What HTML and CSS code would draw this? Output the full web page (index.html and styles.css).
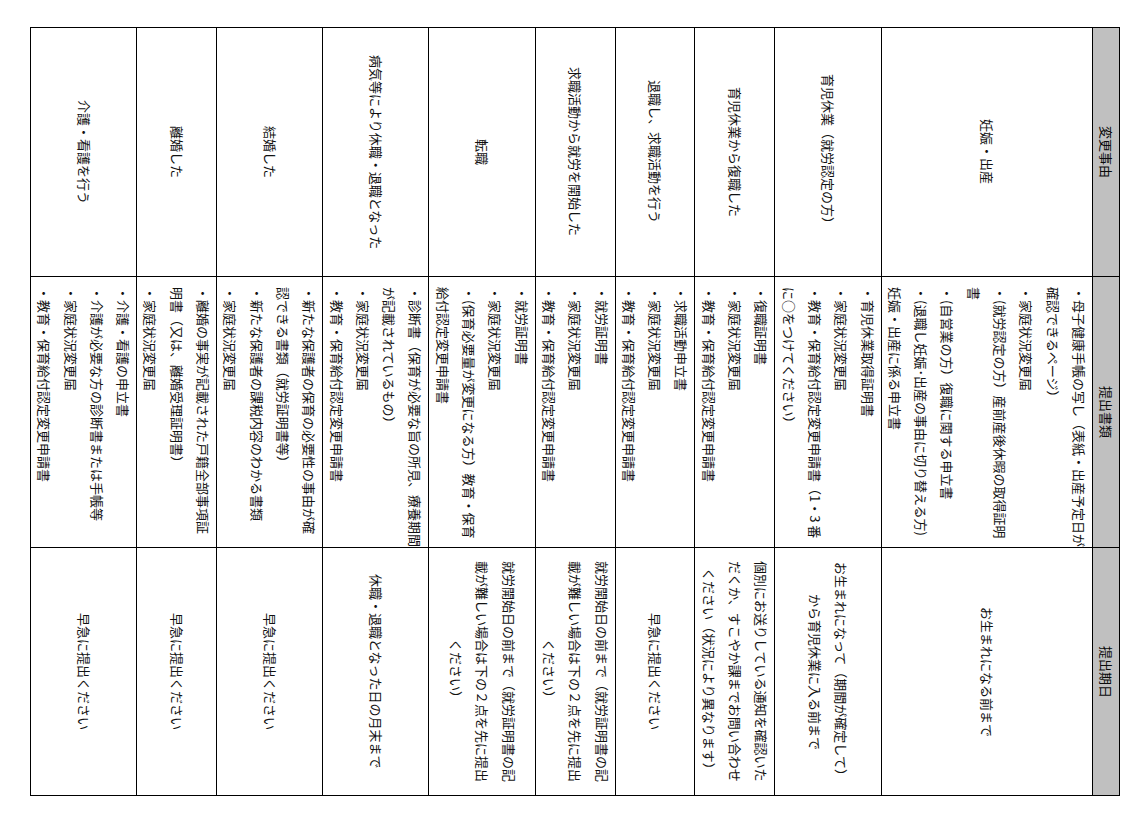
FILE: index.html
```html
<!DOCTYPE html>
<html lang="ja">
<head>
<meta charset="utf-8">
<title>変更事由と提出書類</title>
<link rel="stylesheet" href="styles.css">
</head>
<body>
<div class="sheet">
<table class="change-table">
  <tr class="head">
    <th class="reason">変更事由</th>
    <th class="docs">提出書類</th>
    <th class="due">提出期日</th>
  </tr>
  <tr>
    <td class="reason">妊娠・出産</td>
    <td class="docs">・母子健康手帳の写し（表紙・出産予定日が<br>確認できるページ）<br>・家庭状況変更届<br>・(就労認定の方）産前産後休暇の取得証明<br>書<br>・(自営業の方）復職に関する申立書<br>・(退職し妊娠･出産の事由に切り替える方)<br>妊娠・出産に係る申立書</td>
    <td class="due">お生まれになる前まで</td>
  </tr>
  <tr>
    <td class="reason">育児休業（就労認定の方）</td>
    <td class="docs">・育児休業取得証明書<br>・家庭状況変更届<br>・教育・保育給付認定変更申請書（1・3 番<br>に○をつけてください）</td>
    <td class="due">お生まれになって（期間が確定して）<br>から育児休業に入る前まで</td>
  </tr>
  <tr>
    <td class="reason">育児休業から復職した</td>
    <td class="docs">・復職証明書<br>・家庭状況変更届<br>・教育・保育給付認定変更申請書</td>
    <td class="due">個別にお送りしている通知を確認いた<br>だくか、すこやか課までお問い合わせ<br>ください（状況により異なります）</td>
  </tr>
  <tr>
    <td class="reason">退職し、求職活動を行う</td>
    <td class="docs">・求職活動申立書<br>・家庭状況変更届<br>・教育・保育給付認定変更申請書</td>
    <td class="due">早急に提出ください</td>
  </tr>
  <tr>
    <td class="reason">求職活動から就労を開始した</td>
    <td class="docs">・就労証明書<br>・家庭状況変更届<br>・教育・保育給付認定変更申請書</td>
    <td class="due">就労開始日の前まで（就労証明書の記<br>載が難しい場合は下の２点を先に提出<br>ください）</td>
  </tr>
  <tr>
    <td class="reason">転職</td>
    <td class="docs">・就労証明書<br>・家庭状況変更届<br>・(保育必要量が変更になる方）教育・保育<br>給付認定変更申請書</td>
    <td class="due">就労開始日の前まで（就労証明書の記<br>載が難しい場合は下の２点を先に提出<br>ください）</td>
  </tr>
  <tr>
    <td class="reason">病気等により休職・退職となった</td>
    <td class="docs">・診断書（保育が必要な旨の所見、療養期間<br>が記載されているもの）<br>・家庭状況変更届<br>・教育・保育給付認定変更申請書</td>
    <td class="due">休職・退職となった日の月末まで</td>
  </tr>
  <tr>
    <td class="reason">結婚した</td>
    <td class="docs">・新たな保護者の保育の必要性の事由が確<br>認できる書類（就労証明書等）<br>・新たな保護者の課税内容のわかる書類<br>・家庭状況変更届</td>
    <td class="due">早急に提出ください</td>
  </tr>
  <tr>
    <td class="reason">離婚した</td>
    <td class="docs">・離婚の事実が記載された戸籍全部事項証<br>明書（又は、離婚受理証明書）<br>・家庭状況変更届</td>
    <td class="due">早急に提出ください</td>
  </tr>
  <tr>
    <td class="reason">介護・看護を行う</td>
    <td class="docs">・介護・看護の申立書<br>・介護が必要な方の診断書または手帳等<br>・家庭状況変更届<br>・教育・保育給付認定変更申請書</td>
    <td class="due">早急に提出ください</td>
  </tr>
</table>
</div>
</body>
</html>
```
FILE: styles.css
```css
html, body {
  margin: 0;
  padding: 0;
  background: #ffffff;
}

.sheet {
  padding: 27px 0 0 30px;
}

.change-table {
  writing-mode: vertical-rl;
  text-orientation: sideways;
  border-collapse: collapse;
  font-family: "Noto Sans CJK JP", "Noto Sans", sans-serif;
  font-size: 13px;
  line-height: 26.3px;
  color: #111111;
}

.change-table th,
.change-table td {
  border: 1px solid #000000;
  padding: 0;
  white-space: nowrap;
  vertical-align: middle;
  text-align: center;
}

.change-table th {
  background: #c0c0c0;
  font-weight: normal;
  color: #0a0a0a;
}

.change-table .reason {
  height: 248px;
}

.change-table .docs {
  height: 269px;
}

.change-table td.docs {
  text-align: start;
  padding-top: 10px;
  height: 259px;
}

.change-table .due {
  height: 247px;
}
```
